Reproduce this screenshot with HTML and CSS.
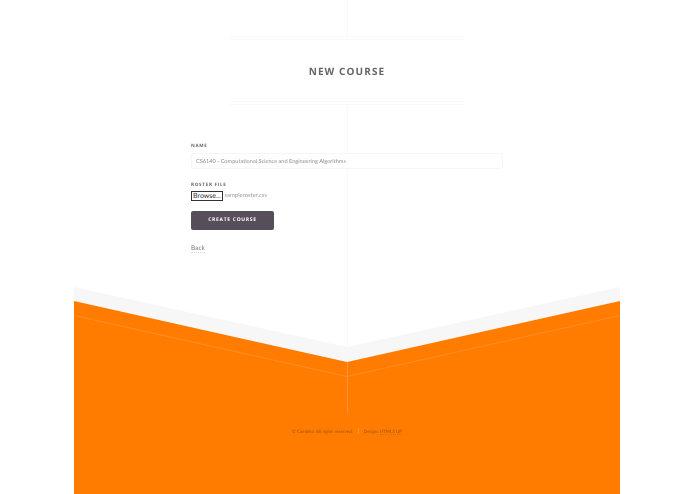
FILE: index.html
```html
<!DOCTYPE html>
<html lang="en">
<head>
<meta charset="utf-8">
<title>New Course</title>
<link rel="stylesheet" href="styles.css">
</head>
<body>
<div class="page">
  <header class="head">
    <div class="vline vline-top"></div>
    <div class="title-box">
      <h1>New Course</h1>
    </div>
  </header>
  <main class="main">
    <div class="vline vline-main"></div>
    <form class="form">
      <label class="label" for="name">Name</label>
      <input class="text" id="name" type="text" placeholder="CS6140 - Computational Science and Engineering Algorithms">
      <span class="label label-file">Roster File</span>
      <div class="file"><span class="browse">Browse...</span><span class="file-name">sampleroster.csv</span></div>
      <button class="submit" type="button">Create Course</button>
      <a class="back" href="#">Back</a>
    </form>
  </main>
  <footer class="foot">
    <svg class="foot-art" viewBox="0 0 546 207" preserveAspectRatio="none" aria-hidden="true">
      <line x1="273.5" y1="0" x2="273.500" y2="60" stroke="#f8f8f8" stroke-width="1"/>
      <polygon points="0,0 273,60 546,0 546,14 273,75 0,14" fill="#f7f7f7"/>
      <polygon points="0,14 273,75 546,14 546,207 0,207" fill="#ff7c00"/>
      <polyline points="0,28.500 273,89.500 546,28.500" fill="none" stroke="#ff9233" stroke-width="0.8"/>
      <line x1="273.5" y1="75" x2="273.500" y2="127" stroke="#ff9233" stroke-width="1"/>
    </svg>
    <p class="copy"><span>© Cambiko. All rights reserved.</span><span class="sep"></span><span>Design: <a href="#">HTML5 UP</a></span></p>
  </footer>
</div>
</body>
</html>
```
FILE: styles.css
```css
* { box-sizing: border-box; }
html, body { margin: 0; height: 100%; background: #fff; }
body {
  font-family: Lato, "Liberation Sans", sans-serif; color: #9a9a9a; overflow: hidden;
  text-rendering: geometricPrecision;
}
.page { width: 546px; height: 494px; margin: 0 auto 0 74px; display: flex; flex-direction: column; }

.head { height: 105px; display: flex; flex-direction: column; align-items: center; }
.vline { width: 1px; background: #f8f8f8; }
.vline-top { height: 36px; }
.title-box {
  width: 234px; height: 69px;
  display: flex; align-items: center; justify-content: center;
  border-top: 4px double #f8f8f8;
  border-bottom: 4px double #f8f8f8;
}
h1 {
  margin: 0; font-family: "Open Sans", sans-serif;
  font-size: 10px; font-weight: 700; letter-spacing: 1.1px;
  text-transform: uppercase; color: #666;
  filter: blur(0.2px);
}

.main { height: 182px; position: relative; padding: 38px 117px 0; }
.vline-main { position: absolute; left: 273px; top: 0; bottom: 0; }
.form { position: relative; display: flex; flex-direction: column; align-items: flex-start; }
.label {
  font-family: "Open Sans", sans-serif; font-size: 4.600px; font-weight: 700; line-height: 6px;
  letter-spacing: 0.7px; text-transform: uppercase; color: #666;
  filter: blur(0.25px);
}
.text {
  width: 312px; height: 16px; margin-top: 4px; padding: 0 4px;
  border: 1px solid #f6f6f6; border-radius: 2px; background: #fff;
  font-family: Lato, sans-serif; font-size: 5.600px; outline: 0;
  text-rendering: geometricPrecision;
  filter: blur(0.2px);
}
.text::placeholder { color: #8f8f8f; opacity: 1; }
.label-file { margin-top: 12.500px; }
.file { display: flex; align-items: center; margin-top: 3px; }
.browse {
  width: 32px; height: 10px; border: 1px solid #333; background: #fff; color: #333;
  font-size: 7px; line-height: 8px; text-align: center;
}
.file-name { margin-left: 1.500px; font-size: 5.900px; color: #999; filter: blur(0.2px); }
.submit {
  width: 83px; height: 18.500px; margin-top: 10.500px; border: 0; border-radius: 2px; background: #564e59;
  color: #fff; font-family: "Open Sans", sans-serif; font-size: 5px; font-weight: 700;
  letter-spacing: 0.7px; text-transform: uppercase;
  text-rendering: geometricPrecision; filter: blur(0.15px);
}
.back { margin-top: 15px; font-size: 6.500px; color: #777; text-decoration: none; border-bottom: 1px dotted #ddd; filter: blur(0.2px); }

.foot { flex: 1; position: relative; display: flex; justify-content: center; }
.foot-art { position: absolute; inset: 0; width: 100%; height: 100%; display: block; }
.copy {
  position: relative; margin: 141px 0 0; display: flex; align-items: center; height: 6px;
  font-size: 4.500px; color: #9a540e; filter: blur(0.2px);
}
.sep { width: 1px; height: 6px; margin: 0 5px; background: #ff9233; }
.copy a { color: inherit; text-decoration: none; border-bottom: 1px dotted #c77020; }
```
